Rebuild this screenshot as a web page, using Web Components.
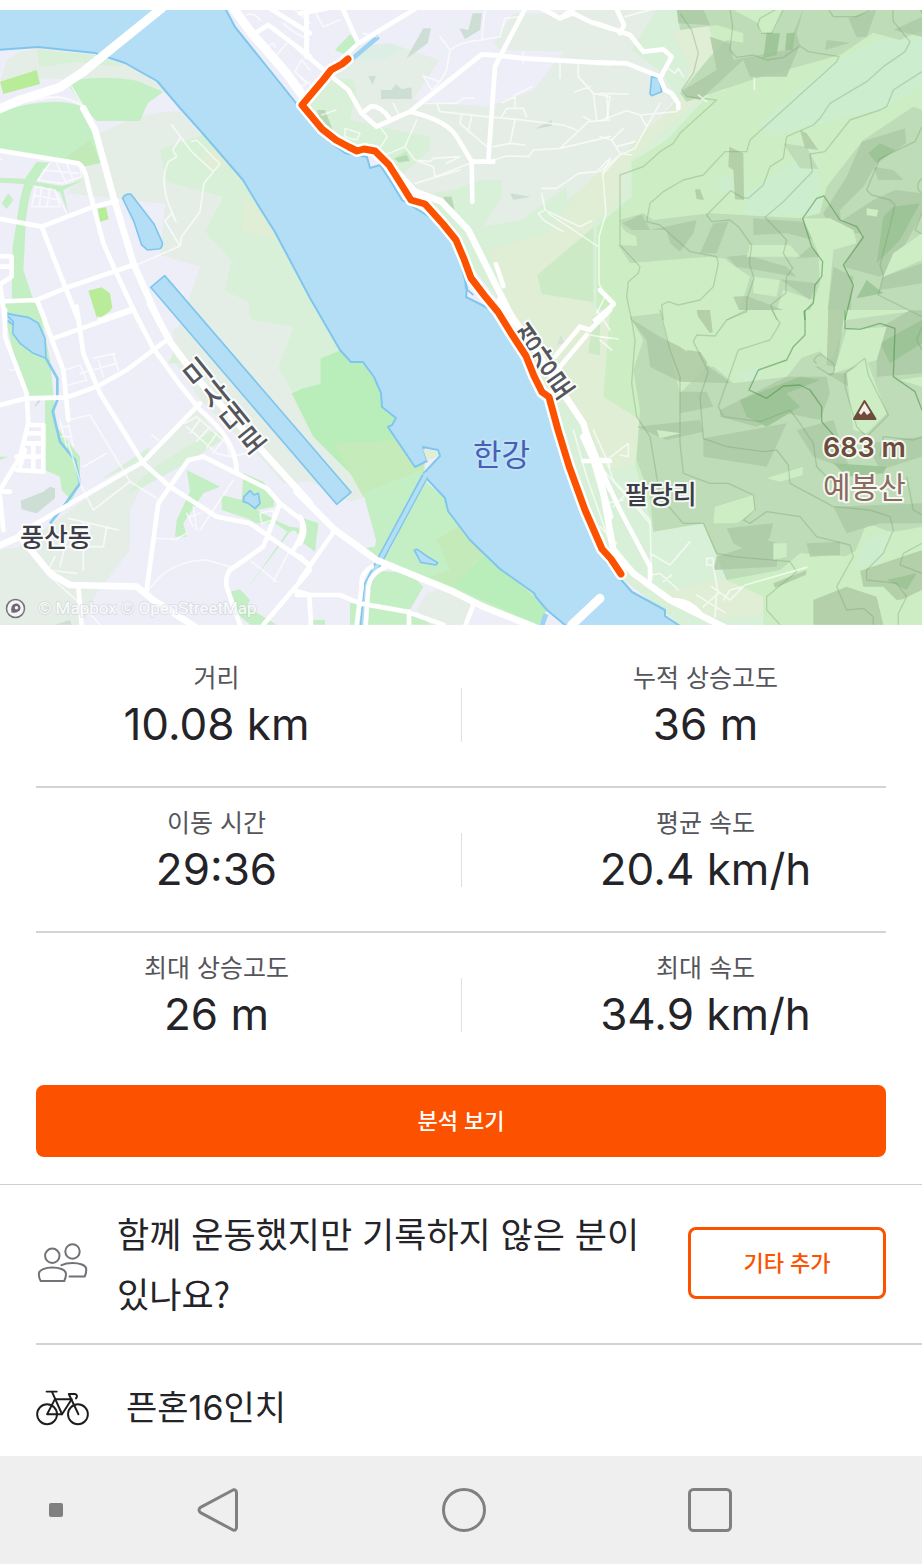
<!DOCTYPE html>
<html lang="ko">
<head>
<meta charset="utf-8">
<meta name="viewport" content="width=device-width, initial-scale=1">
<title>활동</title>
<style>
  body {
    margin: 0;
    background: #fff;
    color: #242428;
    font-family: "Noto Sans CJK KR", sans-serif;
  }
</style>
</head>
<body>
<activity-page>
  <route-map slot="map"></route-map>
  <stat-row>
    <stat-item label="거리">10.08 km</stat-item>
    <stat-item label="누적 상승고도">36 m</stat-item>
  </stat-row>
  <stat-row>
    <stat-item label="이동 시간">29:36</stat-item>
    <stat-item label="평균 속도">20.4 km/h</stat-item>
  </stat-row>
  <stat-row>
    <stat-item label="최대 상승고도">26 m</stat-item>
    <stat-item label="최대 속도">34.9 km/h</stat-item>
  </stat-row>
  <action-button slot="action">분석 보기</action-button>
  <people-row slot="rows">
    함께 운동했지만 기록하지 않은 분이 있나요?
    <action-button slot="button" outline>기타 추가</action-button>
  </people-row>
  <gear-row slot="rows">픈혼16인치</gear-row>
  <system-nav slot="nav"></system-nav>
</activity-page>

<!-- Map drawing: each <g class="t*"> is one sheet of the map, drawn at 3x -->
<template id="map-template">
  <style>
    :host { display: block; padding-top: 10px; }
    svg { display: block; width: 100%; height: auto; background: #eeeef8; }
    .ta { transform: scale(.33333); }
    .tb { transform: translate(300px, 0) scale(.33333); }
    .tc { transform: translate(600px, 0) scale(.33333); }
    .td { transform: translate(0, 310px) scale(.33333); }
    .te { transform: translate(300px, 310px) scale(.33333); }
    .tf { transform: translate(600px, 310px) scale(.33333); }
    .land { fill: #e5eee6; }
    .field { fill: #d8efd8; }
    .sand { fill: #dfeed5; }
    .wood { fill: #c4efc4; }
    .park { fill: #b9ec98; }
    .hill { fill: #cdeec4; }
    .mint { fill: #cdeed3; fill-opacity: .7; }
    .s0 { fill: #cddfd5; }
    .s1 { fill: #bddcb7; }
    .s2 { fill: #aecaa7; fill-opacity: .85; }
    .s3 { fill: #9ac293; fill-opacity: .85; }
    .water { fill: #b4def6; stroke: #7fc6ee; stroke-width: 2; stroke-linejoin: round; }
    .water-small { fill: #b4def6; stroke: #7fc6ee; stroke-width: 5; stroke-linejoin: round; }
    .roads { fill: none; stroke: #fff; stroke-linecap: round; stroke-linejoin: round; }
    .r0 { stroke-width: 27; }
    .r1 { stroke-width: 20; }
    .r2 { stroke-width: 14; }
    .r3 { stroke-width: 5; stroke-opacity: .65; }
    .contour { fill: none; stroke: #6f9f68; stroke-opacity: .33; stroke-width: 4; stroke-linejoin: round; }
    .contour .index { stroke: #4b8f45; stroke-opacity: .55; }
    .route { fill: none; stroke-linejoin: round; stroke-linecap: round; }
    text { paint-order: stroke; stroke: #fff; stroke-opacity: .85; stroke-width: 4px; stroke-linejoin: round; font-family: "Noto Sans CJK KR", sans-serif; }
    .place { font-size: 26px; font-weight: 500; fill: #3d3d47; }
    .street { font-size: 29px; font-weight: 500; fill: #55555e; writing-mode: vertical-rl; text-orientation: upright; }
    .river { font-size: 31px; fill: #4560b4; stroke: #c4e2f8; }
    .peak { font-size: 30px; fill: #8c6a5e; }
    .height { font-family: Inter, sans-serif; font-size: 27px; font-weight: 600; fill: #6d4c3c; }
    .credit { font-family: Roboto, sans-serif; font-size: 17px; fill: #fff; fill-opacity: .9; stroke: #b9c0c8; stroke-opacity: .35; stroke-width: 2px; }
  </style>
  <svg viewBox="0 10 922 615" role="img" aria-label="활동 경로 지도">
    <!-- land cover -->
    <g class="ta">
      <path class="land" d="M0 250L20 180 60 155 120 145 330 170 470 240 500 280 440 270 250 240 130 235 0 245z"/>
      <path class="land" d="M200 580L260 500 300 400Q430 330 545 335L600 400 730 540 930 900V960H545L600 800 480 765 495 612z"/>
      <path class="field" d="M110 150L290 165 370 195 340 200 230 185 120 202z"/>
      <path class="field" d="M480 450L620 400 730 540 840 720 930 890V960H755L745 905 675 872 695 780 615 695 670 590 500 545z"/>
      <path class="sand" d="M610 460L650 440 690 500 620 510zM730 600L765 610 830 720 725 695z"/>
      <path class="wood" d="M215 240Q330 225 410 242L490 275 443 310 420 363H290L250 320 210 262z"/>
      <path class="wood" d="M0 335Q150 285 245 318L270 360 302 488 250 500 240 490 0 450z"/>
      <path fill="#c2e9b8" d="M200 470L270 420 302 488 250 500z"/>
      <path class="wood" d="M110 485L148 488Q120 520 108 545L185 558 250 540 190 570 205 640 180 575 100 555Q85 590 78 660L70 810 120 960H60L35 890 38 740 60 600 72 552 0 548V533L75 536z"/>
      <path class="wood" d="M5 610L25 580 40 600 20 627zM0 905H105L130 960H50z"/>
      <path class="park" d="M0 245L110 210 120 252 10 282zM293 626L318 622 326 658 300 665zM265 872L305 862 330 880 337 925 290 952z"/>
    </g>
    <g class="tb">
      <path class="land" d="M0 310L90 225 150 180 270 130 420 180 340 300 560 320 700 270 790 155 600 150 580 130 640 40H930V960H640L500 750 350 600 230 450 70 420z"/>
      <path fill="#dceee5" d="M150 180L210 135 270 130 310 145 240 185z"/>
      <path class="field" d="M0 320L90 232 160 240 170 270 150 360 240 380 390 410 390 450 300 530 240 480 100 430z"/>
      <path class="field" d="M330 590L460 570 540 540H605V590L550 680 665 660 800 560 930 440V960H640L500 780z"/>
      <path class="sand" d="M560 750L740 700 860 540 930 490V960H640z"/>
      <path fill="#cdeac6" d="M712 825L930 640V915L840 900 725 882z"/>
      <path class="wood" d="M105 150L150 103 182 135 145 168zM280 475L320 452 332 480 300 490z"/>
      <path class="s0" d="M318 177L370 85 393 85 383 130zM478 85L505 90 518 40H546L540 90 495 118zM243 270L275 270 287 252 305 268 335 262V297H243zM205 228H228L217 255zM630 580L692 590 640 600zM705 387L755 360V378zM790 545L820 538 827 546z"/>
      <path fill="#b9d8b5" d="M50 330H75L98 390 70 380zM285 475L320 465 328 484 295 486zM430 590H455L463 628 435 612z"/>
    </g>
    <g class="tc">
      <path class="land" d="M-100 27H180L230 290 95 450-100 600z"/>
      <path class="field" d="M170 27H966V960H-20V560L100 440 230 300 190 220 95 150z"/>
      <path class="sand" d="M215 100L345 45 330 120 375 205 340 240 300 300 240 350 95 480 60 600 -30 680V540L90 440 150 380 240 300 270 200z"/>
      <path class="hill" d="M330 280L380 270 360 200 320 60 240 27H966V960H-10V680L95 590V485L200 420z"/>
      <path class="mint" d="M470 380L680 200 830 120 966 110V260L840 330 700 360 520 410zM440 580L650 440 660 640 440 650zM340 560L380 520 410 590zM560 820H650V870H570zM470 850L520 840 520 900 480 900z"/>
      <path class="s1" d="M232 27H966V90L900 120 820 98 720 165 470 235 260 305 240 280 330 170 380 120 430 128 430 100 350 75 240 90z"/>
      <path class="s2" d="M330 110L390 130 400 180 560 150 600 50 610 27 590 100 600 135 560 230 450 230 430 180 300 300 260 290 250 270 350 210zM745 55L830 27 800 110 770 112zM680 120L750 128 675 150zM880 90L966 50V110zM230 27L310 27 330 75 235 70z"/>
      <path class="s3" d="M500 100L540 100 530 165 490 175zM560 100L585 98 578 150 555 150z"/>
      <path class="hill" d="M395 27H550L520 95 480 100 475 70z"/>
      <path class="s1" d="M550 430L620 440 655 507 600 505zM60 660L130 640 160 660 330 640 600 655 660 640 680 560 790 420 940 320 966 330V960H600L640 900 550 870 520 960H410L450 830 370 775 90 790 55 735 110 735 65 680z"/>
      <path class="s2" d="M388 440L430 460 432 600 405 598 400 510 385 500zM600 390L620 400 655 450 615 445zM285 568L300 568 312 600 290 597zM785 425L915 385 918 430 830 490 790 560 720 630 725 700 700 700 670 640 740 530zM67 670L125 643 150 690 290 660 280 700 240 755 210 730 200 690 95 690zM300 760L340 670 385 665 350 760zM460 655L610 665 640 720 560 700 460 705zM380 770L440 765 560 800 590 830 410 800zM590 775L630 740 660 770zM190 850L222 850 235 910 205 905zM400 890L440 888 550 930 580 960 430 960zM540 838L650 850 630 900zM820 500L880 510 910 540 835 540zM885 570L966 580V640L880 800 840 830 730 800 790 700 750 700 720 665 820 600zM850 830L966 790V850L840 870zM700 800L760 830 750 960 680 960z"/>
      <path class="s3" d="M880 620L960 610 900 720 830 790 850 650zM805 460L840 430 885 450 830 490zM800 840L850 880 770 895z"/>
      <path class="hill" d="M390 780H360L345 880 300 960H80V880L90 790 200 780 330 770zM610 655H690L760 690 770 730 700 750 680 960H620L660 850 655 760zM800 625L835 630 830 650 800 645zM880 760L966 700V780L850 830zM65 690L110 710 110 738 58 735zM450 735H570L600 770H540L440 770zM460 830L540 840 530 890 460 880z"/>
    </g>
    <g class="td">
      <path class="land" d="M930 0H600L520 60 520 150 600 270 780 440 850 520 930 515zM0 720L60 710 240 580 430 450 590 290 640 360 420 540 390 600V720L290 850 240 960H0z"/>
      <path class="field" d="M745 0H930V390L880 250 835 175 880 50 755 30zM380 550L450 480 640 360 680 380 560 460 430 530zM270 530L450 410 440 445 300 510zM505 160L520 130 540 160z"/>
      <path fill="#baedba" d="M875 250L930 228V360z"/>
      <path class="wood" d="M10 0H120L150 150 170 350 240 440 240 520 215 572 185 540 180 500 135 480 135 270 80 260 40 130z"/>
      <path class="wood" d="M560 480L660 530 610 550 550 640 560 680 525 680 530 630 570 545zM665 555L725 570 730 490 790 515 822 560V590L770 600 830 632 870 650 905 655 870 665 740 840 733 850 862 665 825 640 770 640 740 625 665 600zM690 845L720 838 750 870 740 890 830 944H750L710 910zM880 655L930 670V710L905 690zM0 440L25 440 0 450z"/>
      <path class="park" d="M285 0H335L300 25z"/>
      <path class="s0" d="M62 572L130 545 150 530 165 535V565L110 610 65 598zM105 285L130 250 120 275 105 290zM165 944L210 930 215 944z"/>
    </g>
    <g class="te">
      <path class="field" d="M0-200L50 0 155 155H190V240H0z"/>
      <path class="land" d="M0 240L60 370 200 560 150 575 0 500z"/>
      <path fill="#b9eeba" d="M62 145L120 122 155 155 190 155 245 240 250 290 290 325 265 350 345 470 375 460 360 520 200 570 190 530 40 380 0 300V238L62 222z"/>
      <path fill="#c5ebba" d="M100 400L300 390 345 470 375 470 365 530 240 575 190 560z"/>
      <path class="wood" d="M190 550L365 480 355 540 240 740 195 715 225 710 228 690z"/>
      <path class="wood" d="M370 508L440 570 445 600 600 780 700 850 740 900 715 944 520 870 230 755 195 715 225 710 270 720z"/>
      <path fill="#c4eab9" d="M410 690L480 645 560 720 460 830 390 800 450 780z"/>
      <path fill="#b9eeba" d="M560 725L740 900 715 944 460 830z"/>
      <path class="wood" d="M210 780L330 790 370 830 330 900 420 944H205L150 944V880H200zM10 625L55 640 45 725 10 700zM38 930H75V944H38z"/>
      <path class="land" d="M380 850L430 835 520 880 500 944H390L350 900z"/>
      <path class="sand" d="M600 0H930V944L850 600 760 260 700 180z"/>
      <path class="field" d="M770 270L850 320 930 500V760L860 620z"/>
      <path fill="#cdeac6" d="M880 20L930 0V140L865 130zM920 180L930 170V270L912 260z"/>
      <path class="s0" d="M770 105L782 75 795 100z" opacity=".7"/>
    </g>
    <g class="tf">
      <path class="field" d="M0 0H966V944H240L60 800 0 650z"/>
      <path class="sand" d="M0 0H100L150 380 140 460 0 480zM370 810L490 850V915L330 930 60 800 200 840z"/>
      <path class="hill" d="M30 0H966V944H490V860L380 810 310 640 160 660 105 460 120 330 10 260z"/>
      <path class="mint" d="M350 90L410 130 330 220zM410 190L490 170 470 250zM520 640H560V760H520z"/>
      <path class="s1" d="M90 20L180 10 240 250 330 160 400 220 560 200 640 100 690 160 740 30 966 0V520L966 700 800 640 760 740 600 730 540 780 380 810 310 640 160 665 150 560 110 450 120 300 100 180 130 90z"/>
      <path class="s2" d="M90 25L180 80 240 110 370 200 390 220 240 215 150 170 140 90zM260 120L330 130 320 165 270 150zM290 0H330L340 80 300 60zM685 0H735L710 170 680 165zM240 245H320L340 290 240 310zM110 350L300 330 310 365 200 390zM310 385L560 340 500 470 310 440zM360 300L560 200 680 200 690 250 660 330 560 310 470 350 360 320zM590 360L700 330 750 480 640 440zM830 60L930 0H966V190L830 200zM380 655L520 640 510 680 470 740 400 700zM620 700L720 695V735L630 740zM500 690L535 700 530 770 340 780 350 740zM700 590L966 580 966 640 840 640 740 670zM520 820L620 780 610 850 540 870zM780 780L966 720V860L890 870 850 830 790 830zM640 870L740 830 830 860 850 944H640zM570 870L600 880 585 920 565 915zM800 400L966 380V440L840 480zM680 190H800L760 240z"/>
      <path class="s3" d="M420 270L600 200 660 210 560 250 600 290 500 350 440 320zM840 100L966 30V100L870 160zM700 460L860 470 850 490 740 500zM860 810L950 790 920 840z"/>
      <path class="hill" d="M180 0H280L330 70 430 20 520 30 480 80 370 170 330 170 260 60 190 50zM345 590L460 555 465 605 410 640 340 640zM500 505L608 470V495L540 515zM170 360L243 370 180 385zM490 0H680L670 120 560 160 530 180 480 90zM740 190L800 150 860 310 800 370 760 360zM740 60L860 50 830 150 700 190zM510 840L700 760 860 670 966 650V720L760 790 640 850 610 944H500zM840 900L966 840V920zM900 210L966 200V230zM520 700L560 700V740L520 750z"/>
      <path class="mint" d="M800 690L880 660 840 760 760 780z"/>
    </g>

    <!-- contour lines -->
    <g class="contour tc">
      <path d="M240 40L275 90 295 160 280 220 245 270 260 290 350 300 240 400 220 430 180 455 130 500 60 525V735L120 800 115 820 85 845 80 890 95 960"/>
      <path d="M390 27L398 80 390 150 410 172 460 165 500 180 550 172 600 138 625 155 717 170 710 185 450 420 440 455H375L310 525 250 540 190 575 150 610 140 665 180 675 270 755 350 770 355 790 340 860 300 900 235 915 205 905 185 915 190 960"/>
      <path d="M550 27L515 100H485L473 75 480 55 530 27M685 27L700 50H770L810 30M878 27L880 65 930 125 915 155 850 200 800 245 690 310 660 355 640 375 560 410 550 475 510 500 490 555 445 595 425 592 392 572 320 645 335 665 390 660 415 680 455 735 448 790 462 835 440 900V935L380 960"/>
      <path d="M966 215L880 270 860 320 840 330 750 360 675 455 630 462 637 515 550 605 495 652 560 720 550 760 578 805 560 830 557 880 512 915 530 960M960 27L966 40M966 380L945 425 840 475 800 570 815 585 870 600 885 615 870 680 840 795 850 825 835 885 966 950M966 535Q940 560 966 580M966 640L945 690 966 702"/>
      <path class="index" d="M615 960L612 935 640 910 645 855 665 830 668 785 635 740 608 655 650 595 672 588 720 660 770 680 790 712 730 795 760 855 735 960"/>
    </g>
    <g class="contour tf">
      <path d="M95 30L105 90 95 220 110 320 150 380 180 560 250 640 310 640M180 0L210 120 240 200V400L250 490 330 520 385 520 460 555 465 600 430 630 450 640 500 605 600 620 650 680 750 705 760 740 710 830 740 900 790 895 820 920V944"/>
      <path d="M440 0L380 30 345 78 290 75 280 95 325 185 300 260 310 385 380 410 490 425 530 420 565 465 570 520 700 590 810 600 870 620 880 660 850 730 800 780V810L890 820 920 860 895 910V944"/>
      <path d="M515 0L540 40 510 90 415 120 355 290 370 320 480 335 570 300 600 340 640 400 650 470 700 520M650 160Q630 150 662 132L700 160Q710 190 690 195L650 170M795 145L735 190V230L770 350 800 380 865 315 805 195zM966 700L910 730 900 765 966 790M310 640L350 730 400 740 570 755 590 785 500 860V900L540 944M840 440L850 380 940 390 966 380M966 120L950 90 966 50M920 500L940 600 966 615"/>
      <path class="index" d="M615 0V75L580 110 560 150 475 180 447 240 500 265 550 228 600 225 630 240 665 290V335L700 375M735 0V55L780 58 840 40 885 55 880 200 945 245 966 300"/>
    </g>

    <!-- river and other water -->
    <path class="water" d="M-4 50L38 47 95 53 125 63 157 81 180 108 205 136 243 180 258 205 275 232 310 298 340 350 351 362H363L374 377 381 393 382 407 396 418 392 425 388 427 415 467 427 461 423 447 438 450 440 456 424 473 427 479 445 498 448 511 470 540 500 569 534 593 536 597 547 610 571 630H686L665 616 665 610 632 592 618 576 605 560 595 530 570 460 549 400 538 392 530 372 525 360 510 335 495 312 480 304 466 297 467 288 455 240 438 222 420 211 402 200 390 180 380 165 370 168 367 157 345 153 330 142 300 108 268 68 235 27 224 6H-4z"/>
    <path class="sand" d="M427 461L423 449 437 451 438 456z"/>
    <path d="M425 476L380 560 367 585 363 628" fill="none" stroke="#7fc6ee" stroke-width="7"/>
    <path d="M427 473L380 560 367 585 363 628" fill="none" stroke="#b4def6" stroke-width="4"/>
    <path d="M546 614L541 628" stroke="#9bd3f2" stroke-width="5"/>
    <g class="ta">
      <path class="water-small" d="M368 595Q375 580 393 583L462 672 487 728Q488 745 475 747L442 750 425 735 402 665zM452 862L494 827 1053 1477 1010 1513z"/>
      <path class="water-small" d="M15 937L85 960 60 990 20 960z"/>
    </g>
    <g class="tb">
      <path d="M155 178L235 110" fill="none" stroke="#9ad2f1" stroke-width="14"/>
      <path d="M495 830L497 865 520 885" fill="none" stroke="#7fc6ee" stroke-width="5"/>
    </g>
    <g class="tc"><path class="water-small" d="M155 230L178 235 185 275 155 287 150 282z" /></g>
    <g class="td">
      <path class="water-small" d="M15 10L85 22 115 40 135 85 138 145 100 130 60 100 38 70 40 35z"/>
      <path d="M138 145L172 205V270L158 305 180 395 225 450 240 520 190 590 150 640" fill="none" stroke="#86caef" stroke-width="8"/>
      <path class="water-small" d="M732 560L750 542 762 555 775 550 780 580 765 595 745 580 730 575z"/>
    </g>
    <g class="te"><path class="water-small" d="M343 720L352 718 380 738 413 758 408 765 362 757z"/></g>

    <!-- roads -->
    <g class="roads">
      <g class="ta">
        <path class="r0" d="M-10 330L60 300 180 262 250 215 330 150 485 25M700 25L755 100 860 220 910 290"/>
        <path class="r1" d="M250 325L285 390 340 590 400 790 480 970"/>
        <path class="r2" d="M-10 450L235 490Q255 500 265 560L310 730 345 810 415 960M-10 655L125 680 280 620 350 603M125 680L195 860 235 960M-10 905L110 900 195 865 400 795M110 900L135 960M300 960L400 925"/>
        <path class="r3" d="M95 305Q180 270 250 320M120 300Q170 285 210 300M215 260L250 320"/>
        <path class="r2" d="M930 170L805 75 765 100M810 25L930 100M920 25V160"/>
        <path class="r3" d="M515 375L575 455 640 515 660 492 590 420 575 425M640 515L612 550 600 635 545 710 540 738 495 663 515 640 528 665 505 610Q480 540 505 485L530 470 518 450 542 412M540 738L410 795M885 30L930 70M860 130L830 165M800 140L820 130 825 140M740 45Q760 35 780 60M930 210L905 180 885 215 920 250 905 260 880 240M850 70Q880 100 930 120"/>
        <path class="r3" d="M150 488L115 540 185 550 245 530 240 500M130 510L235 520M170 490L200 550M200 490L220 540M108 560L165 570 180 620 95 620zM100 585L175 600M125 560L118 620M150 565L140 622M165 570L200 640M-5 470L5 480"/>
        <path class="r2" d="M-5 768L35 770V830L5 850M0 800H30M0 850L15 960"/>
      </g>
      <g class="tb">
        <path class="r2" d="M-10 140L95 230 145 270 185 340 230 380 330 335 545 163 600 167 670 175 930 190M130 30L175 130 345 27M0 40L80 25M20 40V170M185 340L215 318Q245 320 268 355M330 335Q440 360 470 410L515 485H580M515 485L517 605M565 480L585 200 605 160 675 27M175 130L90 210 0 310"/>
        <path class="r2" d="M725 25L780 55 820 40 870 65 930 85M780 55L830 20"/>
        <path class="r1" d="M235 455L345 575 425 605 505 690 590 860 640 960"/>
        <path class="r2" d="M588 793L610 858M885 960L930 925"/>
        <path class="r3" d="M420 110L450 150 440 210 420 245 370 228 395 270 420 245M450 150Q480 125 545 120L600 110 615 55 660 50M545 120L555 30M375 310L470 310 490 295 522 293M410 310L420 335 560 350 650 358 790 375 830 390M605 350L620 325 670 325 680 350M645 320V285L695 260M605 308L645 290M645 360L630 430 580 440M630 430L675 435M485 345L480 370 560 440M515 350L505 395M350 360L315 440 345 480 400 500 405 530 510 490M345 550L480 510M315 440L255 465M300 350L280 310M345 480L390 485 400 475 480 470 440 490M580 480L620 468 685 470 700 450 780 445 865 365 930 360M780 445L930 410M670 155V190M780 185V235M835 190V230L880 280 890 360M825 275L870 260M880 280L930 290 920 360M850 350L870 360"/>
        <path class="r3" d="M725 565L770 565 835 520 890 515 930 475M725 580L735 630 715 640 730 660 790 695M735 630L840 680 875 662M745 640L895 740M930 480L908 520 918 640 897 710V850L915 890 890 940M65 345L108 330M135 385L180 400 170 420 150 415 135 410zM240 380L262 410 235 450M0 230L40 260M40 27L70 80 120 60M190 100L230 110"/>
      </g>
      <g class="tc">
        <path class="r2" d="M-10 70L90 105 130 155 190 148 215 170 180 235 195 270 215 280 235 310V325M50 27L72 75 60 100M-10 187L80 190 180 230"/>
        <path class="r3" d="M75 50L160 27M205 205L225 220 235 205 250 230M235 325L230 335 120 345 80 332 0 362M120 345L140 380 180 310M140 380L105 445 60 465 0 515M0 280L85 282M20 285L25 355M0 410L35 420 70 385M35 420L60 460 95 465M50 440L105 425M60 465L10 520M295 285L320 305M463 235V268"/>
        <path class="r2" d="M0 870L42 912 0 950"/>
      </g>
      <g class="td">
        <path class="r1" d="M450-20L510 95 600 215 930 580"/>
        <path class="r2" d="M0 285L80 265 200 262 290 230 380 180 500 90M115-20L190 180 205 330M160 85L400 0M230-10L250 130 300 250 430 460 510 530 650 620 750 640 930 765M395-10L460 115 540 225 600 300M600 280L430 455 230 570 60 670M15 0L15 80 80 250 85 340 60 440 0 540M0 545H30M0 560L10 660M600 300Q710 390 710 485M440 840L475 580 565 450 610 440 710 490 800 535 840 580 905 630Q915 670 880 720M840 580L790 710 690 780Q675 800 680 830L720 944M930 780L790 944M880 840L930 855M235 830L245 944"/>
        <path class="r1" d="M-10 710L60 680 150 790 210 825 410 830 460 870 600 960"/>
        <path class="r2" d="M95 345H130V485L50 480M50 440H120M80 400H130M85 370H130M75 420L60 470M100 410V480"/>
        <path class="r3" d="M195 180L240 165 260 210 205 225M240 190L350 160M280 145L345 130M295 150L310 200M340 135L355 180M205 330L270 315 390 515 280 600 245 530 205 400M250 470L320 430M390 515L470 565M205 340L220 410M180 330L200 410M180 350H210M185 380H215M455 375L475 390M205 625L355 660M320 650L310 710H200M250 640V780M165 740L145 780 230 790M200 690L180 770M470 685L530 688 560 670M445 840L480 800Q540 750 620 750L690 770M600 660L700 510M560 610L580 650M570 620L600 610M580 590L590 660M755 755L830 815M870 720L820 815M780 610L785 640 820 630 820 600zM560 350L650 430 690 440 740 430M555 340L590 320 680 400 690 440M600 330L570 370M630 350L590 395M650 370L620 415M670 390L640 430M150 800L240 880 300 944M30 180H45"/>
      </g>
      <g class="te">
        <path class="r1" d="M-10 545L105 660 230 750 460 845 550 890 700 950"/>
        <path class="r2" d="M105 660L0 810M215 770Q180 790 185 830L170 944M275 765Q215 780 205 830L197 944M-10 855H120L180 880 320 905 430 944M28 860L33 944M327 905V944M520 885L497 944M0 620Q25 660 0 700M0 740L25 765"/>
        <path class="r1" d="M600-30L700 110 790 250 850 340 930 620"/>
        <path class="r0" d="M815 945L900 865"/>
        <path class="r2" d="M765 140L840 50 870 60 930 0M860 75L780 170 765 200M850 453H930M850 340L930 540"/>
        <path class="r3" d="M870 75L930 85M890 0L930 60M820 360L860 500 930 700M880 360L930 470"/>
      </g>
      <g class="tf">
        <path class="r1" d="M-50 380L0 490 40 720 100 790 210 870 370 950"/>
        <path class="r2" d="M0 470L60 600 150 770V810M0 450H20M215 870Q270 870 300 910"/>
        <path class="r3" d="M0 80L55 87M0 90L35 120M20 450L85 400V440L60 435M20 455L40 510 150 630 155 800M10 480L80 560 150 640M150 730L210 765 270 695M155 795L180 790 235 840M215 795L190 815M340 770V745H320V765H335M340 770L355 850 310 890M335 830L390 870 435 825 620 772M290 855L375 908M350 850L345 920M370 870L390 840 430 830M20 580L70 570M0 650L50 700M40 590L90 540"/>
      </g>
    </g>

    <!-- street names run down the road, under the route -->
    <text class="street" transform="translate(188 361) rotate(-39)" x="0" y="0">미사대로</text>
    <text class="street" transform="translate(519 326) rotate(-35)" x="0" y="0">경강로</text>

    <!-- recorded route -->
    <g class="route">
      <path id="route" d="M348 59L342 64 331 70 324 79 302 105 312 117 322 129 336 140 349 147 357 151 364 149 375 151 389 165 401 184 411 200 425 204 443 224 456 240 464 259 471 278 484 295 498 312 511 333 526 356 534 376 542 392 549 397 558 430 569 466 585 510 602 549 611 559 621 574" stroke="#fff" stroke-width="12"/>
      <path d="M348 59L342 64 331 70 324 79 302 105 312 117 322 129 336 140 349 147 357 151 364 149 375 151 389 165 401 184 411 200 425 204 443 224 456 240 464 259 471 278 484 295 498 312 511 333 526 356 534 376 542 392 549 397 558 430 569 466 585 510 602 549 611 559 621 574" stroke="#fc5200" stroke-width="7"/>
    </g>

    <text class="river" x="473" y="466">한강</text>
    <text class="place" x="20" y="547">풍산동</text>
    <text class="place" x="625" y="504">팔당리</text>
    <path d="M864.500 401L875.500 419H854z" fill="#f4efe8" stroke="#6d4c3c" stroke-width="2" stroke-linejoin="round"/>
    <path d="M853.500 419L858 412 861 415 864 411 867 415 871 412 876 419z" fill="#6d4c3c"/>
    <text class="height" x="823" y="457">683 m</text>
    <text class="peak" x="823" y="498">예봉산</text>
    <circle cx="15.500" cy="608.500" r="9" fill="#f5f5f8" stroke="#74747a" stroke-width="1.500"/>
    <path d="M11.500 612.500Q10 604 16 603.500A4.500 4.500 0 0 1 20.500 608.500Q19 613.500 11.500 612.500z" fill="#6a6a70"/>
    <circle cx="16.500" cy="607.800" r="1.800" fill="#f5f5f8"/>
    <text class="credit" x="38" y="614">© Mapbox © OpenStreetMap</text>
  </svg>
</template>

<script>
class RouteMap extends HTMLElement {
  constructor() {
    super();
    this.attachShadow({ mode: 'open' });
    const template = document.getElementById('map-template');
    this.shadowRoot.appendChild(template.content.cloneNode(true));
  }
}

class ActivityPage extends HTMLElement {
  constructor() {
    super();
    this.attachShadow({ mode: 'open' });
    this.shadowRoot.innerHTML = `
      <style>
        :host { display: flex; flex-direction: column; min-height: 100vh; }
        main { flex: 1; }
        .stats { padding: 18px 36px 0; }
        .action { padding: 8px 36px 27px; }
      </style>
      <main>
        <slot name="map"></slot>
        <div class="stats"><slot></slot></div>
        <div class="action"><slot name="action"></slot></div>
        <slot name="rows"></slot>
      </main>
      <slot name="nav"></slot>
    `;
  }
}

class StatRow extends HTMLElement {
  constructor() {
    super();
    this.attachShadow({ mode: 'open' });
    this.shadowRoot.innerHTML = `
      <style>
        :host {
          display: grid;
          grid-template-columns: 1fr 128px 1fr;
          box-sizing: border-box;
          height: 145px;
          border-bottom: 2px solid #d2d2d7;
        }
        :host(:last-of-type) { border-bottom: 0; height: 144px; }
        .divider {
          grid-area: 1 / 2;
          justify-self: center;
          width: 1px;
          height: 54px;
          margin-top: 45px;
          background: #dfdfe3;
        }
        ::slotted(:last-child) { grid-column: 3; }
        ::slotted(:first-child) { grid-column: 1; }
        ::slotted(*) { grid-row: 1; }
      </style>
      <slot></slot>
      <div class="divider"></div>
    `;
  }
}

class StatItem extends HTMLElement {
  constructor() {
    super();
    this.attachShadow({ mode: 'open' });
    this.shadowRoot.innerHTML = `
      <style>
        :host { display: block; padding-top: 15px; text-align: center; }
        .label { font-size: 25px; line-height: 36px; color: #55555b; }
        .value {
          font-family: Inter, "Noto Sans CJK KR", sans-serif;
          font-size: 44px;
          line-height: 60px;
        }
      </style>
      <div class="label"></div>
      <div class="value"><slot></slot></div>
    `;
  }

  connectedCallback() {
    this.shadowRoot.querySelector('.label').textContent = this.getAttribute('label');
  }
}

class ActionButton extends HTMLElement {
  constructor() {
    super();
    this.attachShadow({ mode: 'open' });
    this.shadowRoot.innerHTML = `
      <style>
        :host { display: block; }
        button {
          display: block;
          width: 100%;
          height: 72px;
          padding: 0 0 4px;
          border: 3px solid #fc5200;
          border-radius: 8px;
          background: #fc5200;
          color: #fff;
          font: 500 22px/30px "Noto Sans CJK KR", sans-serif;
          cursor: pointer;
        }
        :host([outline]) button { background: #fff; color: #fc5200; }
      </style>
      <button type="button"><slot></slot></button>
    `;
  }
}

class PeopleRow extends HTMLElement {
  constructor() {
    super();
    this.attachShadow({ mode: 'open' });
    this.shadowRoot.innerHTML = `
      <style>
        :host {
          display: grid;
          grid-template-columns: 53px 1fr 198px;
          column-gap: 28px;
          align-items: center;
          padding: 18px 36px 20px;
          border-top: 1px solid #cfcfd4;
        }
        svg { width: 53px; height: 42px; }
        p { margin: 0; font-size: 35px; line-height: 60px; }
      </style>
      <svg viewBox="36 1242 53 42" fill="none" stroke="#717178" stroke-width="2" stroke-linejoin="round" stroke-linecap="round" aria-hidden="true">
        <circle cx="52.300" cy="1255.800" r="7.200"/>
        <circle cx="72.500" cy="1251.500" r="7.200"/>
        <path d="M40.700 1281h23.600c1.400-3 1.800-5.400 1.600-7.600-.3-3.800-6.800-5.900-13.600-5.900s-13.100 2.200-13.400 5.900c-.2 2.400.3 4.900 1.800 7.600z"/>
        <path d="M61.500 1265.200c3-1.500 6.800-2.200 11-2.200 7 0 13.400 2.200 13.700 5.800.2 2.500-.2 5-1.500 7.800H69.500"/>
      </svg>
      <p><slot></slot></p>
      <slot name="button"></slot>
    `;
  }
}

class GearRow extends HTMLElement {
  constructor() {
    super();
    this.attachShadow({ mode: 'open' });
    this.shadowRoot.innerHTML = `
      <style>
        :host { display: block; padding-left: 36px; }
        .row {
          display: flex;
          align-items: center;
          gap: 36px;
          height: 94px;
          padding-top: 16px;
          border-top: 2px solid #d2d2d7;
        }
        svg { width: 54px; height: 38px; }
        .name { font-family: Inter, "Noto Sans CJK KR", sans-serif; font-size: 34px; line-height: 50px; }
      </style>
      <div class="row">
        <svg viewBox="35 1391 56 38" fill="none" stroke="#1d1d20" stroke-width="2" stroke-linejoin="round" stroke-linecap="round" aria-hidden="true">
          <circle cx="46.500" cy="1416.500" r="10.300"/>
          <circle cx="78.500" cy="1416.500" r="10.300"/>
          <path d="M46.500 1416.500L54.500 1401H72L62 1416.500z"/>
          <path d="M62 1416.500L51.500 1393M46 1393H56.500M79 1416.500L69 1395.500H75.500Q79 1396.500 76.500 1400"/>
        </svg>
        <span class="name"><slot></slot></span>
      </div>
    `;
  }
}

class SystemNav extends HTMLElement {
  constructor() {
    super();
    this.attachShadow({ mode: 'open' });
    this.shadowRoot.innerHTML = `
      <style>
        :host { display: block; background: #efefef; }
        nav {
          display: grid;
          grid-template-columns: 78fr 246fr 246fr 246fr;
          height: 108px;
          padding: 0 89px 0 17px;
        }
        button {
          display: flex;
          align-items: center;
          justify-content: center;
          padding: 0;
          border: 0;
          background: none;
        }
        svg { width: 48px; height: 48px; fill: none; stroke: #808080; stroke-width: 3; stroke-linejoin: round; }
      </style>
      <nav>
        <button type="button" aria-label="메뉴 고정">
          <svg viewBox="0 0 48 48"><rect x="17" y="17" width="14" height="14" rx="2" fill="#808080" stroke="none"/></svg>
        </button>
        <button type="button" aria-label="뒤로">
          <svg viewBox="0 0 48 48"><path d="M39.500 3.700L6.500 21.400Q3.500 24 6.500 26.600L39.500 44.300Q42.500 44.500 42.500 41V7Q42.500 3.500 39.500 3.700z"/></svg>
        </button>
        <button type="button" aria-label="홈">
          <svg viewBox="0 0 48 48"><circle cx="24" cy="24" r="20.500"/></svg>
        </button>
        <button type="button" aria-label="최근 앱">
          <svg viewBox="0 0 48 48"><rect x="3.500" y="3.500" width="41" height="41" rx="4"/></svg>
        </button>
      </nav>
    `;
  }
}

customElements.define('route-map', RouteMap);
customElements.define('activity-page', ActivityPage);
customElements.define('stat-row', StatRow);
customElements.define('stat-item', StatItem);
customElements.define('action-button', ActionButton);
customElements.define('people-row', PeopleRow);
customElements.define('gear-row', GearRow);
customElements.define('system-nav', SystemNav);
</script>
</body>
</html>
